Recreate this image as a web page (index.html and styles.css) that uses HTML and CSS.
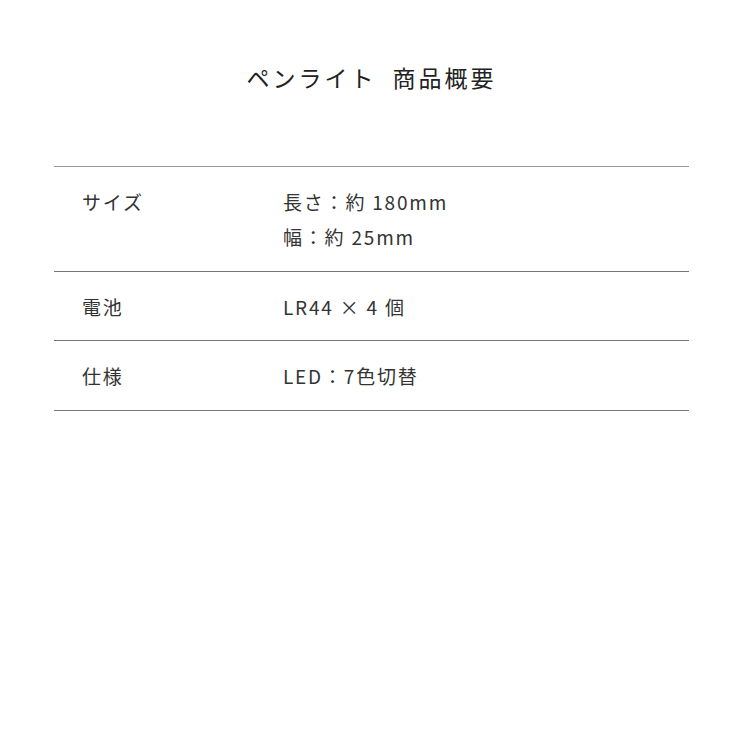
FILE: index.html
```html
<!DOCTYPE html>
<html lang="ja">
<head>
<meta charset="utf-8">
<link rel="stylesheet" href="styles.css">
</head>
<body>
<div class="wrap">
  <h1 class="title">ペンライト&nbsp;商品概要</h1>
  <table class="spec">
    <tr>
      <th>サイズ</th>
      <td>長さ：約 180mm<br>幅：約 25mm</td>
    </tr>
    <tr>
      <th>電池</th>
      <td>LR44 × 4 個</td>
    </tr>
    <tr>
      <th>仕様</th>
      <td>LED：7色切替</td>
    </tr>
  </table>
</div>
</body>
</html>
```
FILE: styles.css
```css
html, body {
  margin: 0;
  padding: 0;
  background: #fff;
}
body {
  font-family: "Noto Sans CJK JP", "Noto Sans", sans-serif;
  color: #333;
}
.wrap {
  width: 635px;
  margin-left: 54px;
  padding-top: 58px;
}
.title {
  margin: 0;
  text-align: center;
  font-size: 23px;
  font-weight: 400;
  line-height: 38px;
  letter-spacing: 3px;
  word-spacing: 8px;
  color: #222;
}
.spec {
  width: 100%;
  margin-top: 70px;
  border-collapse: collapse;
  border-top: 1px solid #999;
}
.spec tr {
  border-bottom: 1px solid #777;
}
.spec th,
.spec td {
  text-align: left;
  vertical-align: top;
  font-weight: 400;
  font-size: 19px;
  line-height: 35px;
  letter-spacing: 1.8px;
  padding: 17px 0 16.5px 0;
}
.spec th {
  width: 201px;
  padding-left: 28px;
}
```
